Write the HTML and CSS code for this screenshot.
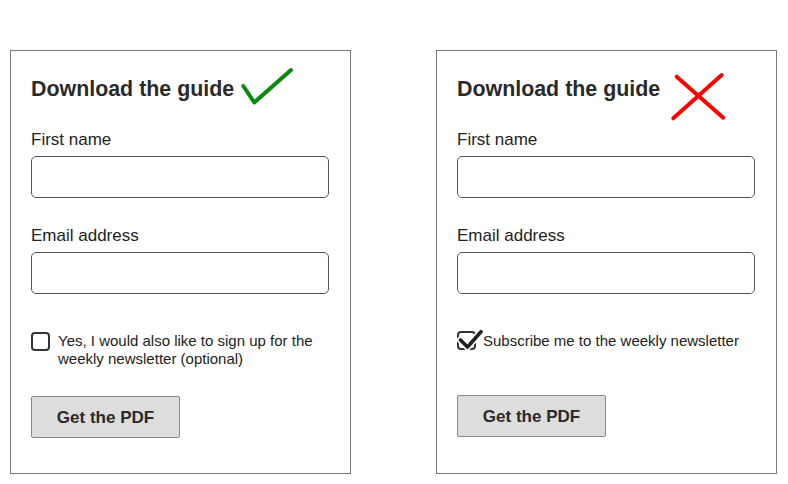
FILE: index.html
```html
<!DOCTYPE html>
<html lang="en">
<head>
<meta charset="utf-8">
<title>Download the guide</title>
<link rel="stylesheet" href="styles.css">
</head>
<body>
<div class="page">
  <form class="card">
    <h2 class="title">Download the guide</h2>
    <svg class="mark mark-good" width="70" height="50" viewBox="0 0 70 50" aria-hidden="true">
      <path d="M13.3 26 L24.3 42.5 L61 10" fill="none" stroke="#0a8a0a" stroke-width="4" stroke-linecap="round" stroke-linejoin="round"/>
    </svg>
    <label class="field-label">First name</label>
    <div class="input"></div>
    <label class="field-label">Email address</label>
    <div class="input"></div>
    <div class="check-row">
      <span class="box"></span>
      <span class="check-text">Yes, I would also like to sign up for the weekly newsletter (optional)</span>
    </div>
    <div class="button">Get the PDF</div>
  </form>

  <form class="card">
    <h2 class="title">Download the guide</h2>
    <svg class="mark mark-bad" width="75" height="60" viewBox="0 0 75 60" aria-hidden="true">
      <path d="M16.7 11.7 L63.3 52.7 M61.7 10 L13.3 53.3" fill="none" stroke="#ff0000" stroke-width="4" stroke-linecap="round"/>
    </svg>
    <label class="field-label">First name</label>
    <div class="input"></div>
    <label class="field-label">Email address</label>
    <div class="input"></div>
    <div class="check-row">
      <svg class="box-checked" width="26" height="24" viewBox="0 0 26 24" aria-hidden="true">
        <rect x="1" y="4" width="17" height="17" rx="3" fill="#fff" stroke="#333" stroke-width="2"/>
        <path d="M3.5 12 L10.5 19 L24 3.7" fill="none" stroke="#fff" stroke-width="7" stroke-linecap="round" stroke-linejoin="round"/>
        <path d="M3.5 12 L10.5 19 L24 3.7" fill="none" stroke="#222" stroke-width="3.6" stroke-linecap="round" stroke-linejoin="round"/>
      </svg>
      <span class="check-text">Subscribe me to the weekly newsletter</span>
    </div>
    <div class="button">Get the PDF</div>
  </form>
</div>
</body>
</html>
```

FILE: styles.css
```css
html, body {
  margin: 0;
  padding: 0;
  background: #fff;
}

body {
  font-family: "Liberation Sans", Arial, Helvetica, sans-serif;
  color: #222;
}

.page {
  display: flex;
  gap: 85px;
  padding: 50px 0 0 10px;
}

.card {
  position: relative;
  box-sizing: border-box;
  width: 341px;
  height: 424px;
  border: 1px solid #777;
  padding: 26px 21px 0 20px;
  display: flex;
  flex-direction: column;
  margin: 0;
}

.title {
  margin: 0;
  font-size: 21.4px;
  line-height: 25px;
  font-weight: bold;
  color: #2a2a2a;
}

.mark {
  position: absolute;
}

.mark-good {
  left: 219px;
  top: 9px;
}

.mark-bad {
  left: 223px;
  top: 14px;
}

.field-label {
  display: block;
  font-size: 17px;
  line-height: 20px;
  margin-top: 28px;
  margin-bottom: -2px;
}

.field-label + .input {
  margin-top: 8px;
}

.input {
  box-sizing: border-box;
  height: 42px;
  width: 298px;
  border: 1px solid #555;
  border-radius: 5px;
  background: #fff;
}

.check-row {
  display: flex;
  align-items: flex-start;
  gap: 8px;
  margin-top: 37px;
  min-height: 36px;
}

.box {
  flex: none;
  box-sizing: border-box;
  width: 19px;
  height: 19px;
  margin-top: 1px;
  border: 2px solid #333;
  border-radius: 4px;
}

.box-checked {
  flex: none;
  margin-top: -3px;
  margin-right: -8px;
}

.check-text {
  font-size: 15px;
  line-height: 18px;
  padding-top: 1px;
}

.button {
  box-sizing: border-box;
  margin-top: 28px;
  width: 149px;
  height: 42px;
  padding-top: 2px;
  background: #dddddd;
  border: 1px solid #888;
  border-radius: 2px;
  font-size: 17px;
  font-weight: bold;
  color: #2a2a2a;
  display: flex;
  align-items: center;
  justify-content: center;
}
```
